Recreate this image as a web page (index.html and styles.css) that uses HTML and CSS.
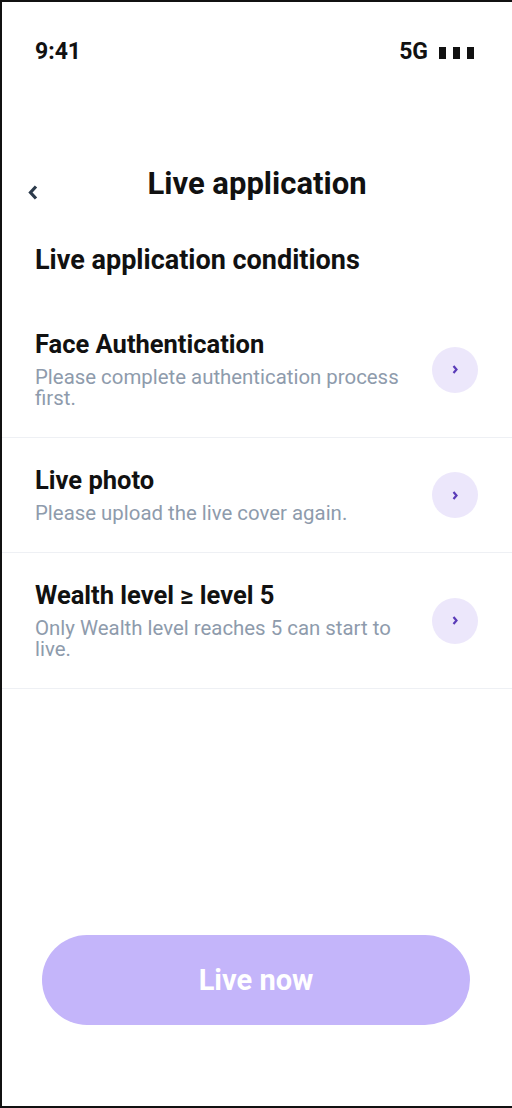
FILE: index.html
```html
<!DOCTYPE html>
<html>
<head>
	<title>Live application</title>
	<link rel="stylesheet" href="styles.css">
</head>
<body>
<div class="phone">
	<div class="status">
		<span class="time">9:41</span>
		<span class="net">5G <i class="bar"></i><i class="bar"></i><i class="bar"></i></span>
	</div>
	<div class="header">
		<a href="javascript:;" class="back">
			<svg width="10" height="15" viewBox="0 0 10 15"><polyline points="8,1.5 2.5,7.5 8,13.5" fill="none" stroke="#2c3a4b" stroke-width="3.2"/></svg>
		</a>
		<h1 class="title">Live application</h1>
	</div>
	<h2 class="heading">Live application conditions</h2>
	<ul class="list">
		<li class="item">
			<div class="text">
				<div class="name">Face Authentication</div>
				<div class="desc">Please complete authentication process first.</div>
			</div>
			<span class="go"><svg width="6" height="9" viewBox="0 0 6 9"><polyline points="1.5,1 4.5,4.5 1.5,8" fill="none" stroke="#5a3bb8" stroke-width="2.2"/></svg></span>
		</li>
		<li class="item">
			<div class="text">
				<div class="name">Live photo</div>
				<div class="desc">Please upload the live cover again.</div>
			</div>
			<span class="go"><svg width="6" height="9" viewBox="0 0 6 9"><polyline points="1.5,1 4.5,4.5 1.5,8" fill="none" stroke="#5a3bb8" stroke-width="2.2"/></svg></span>
		</li>
		<li class="item">
			<div class="text">
				<div class="name">Wealth level ≥ level 5</div>
				<div class="desc">Only Wealth level reaches 5 can start to live.</div>
			</div>
			<span class="go"><svg width="6" height="9" viewBox="0 0 6 9"><polyline points="1.5,1 4.5,4.5 1.5,8" fill="none" stroke="#5a3bb8" stroke-width="2.2"/></svg></span>
		</li>
	</ul>
	<div class="foot">
		<a href="javascript:;" class="btn">Live now</a>
	</div>
</div>
</body>
</html>
```
FILE: styles.css
```css
*{margin: 0;padding: 0;box-sizing: border-box;text-decoration: none;list-style: none;}
body{font-family: Roboto, "Noto Sans", sans-serif;color: #111;background: #fff;}
.phone{width: 512px;height: 1108px;border-top: 2px solid #111;border-left: 2px solid #111;border-bottom: 2px solid #111;display: flex;flex-direction: column;}
.status{display: flex;justify-content: space-between;align-items: center;padding: 37px 38px 0 33px;height: 63px;font-size: 23px;line-height: 26px;font-weight: 700;}
.net{display: flex;align-items: center;gap: 7px;}
.net .bar{display: block;width: 7px;height: 12px;background: #111;margin-top: 1px;}
.net .bar:first-of-type{margin-left: 4px;}
.header{position: relative;margin-top: 102px;height: 34px;}
.title{text-align: center;font-size: 31px;line-height: 34px;font-weight: 700;}
.back{position: absolute;left: 26px;top: 18px;display: block;width: 10px;height: 15px;}
.back svg{display: block;}
.heading{margin-top: 44px;padding-left: 33px;font-size: 27px;line-height: 30px;font-weight: 700;}
.list{margin-top: 27px;}
.item{display: flex;align-items: center;padding: 28px 34px 28px 33px;border-bottom: 1px solid #eef0f4;}
.text{flex: 1;padding-right: 28px;}
.name{font-size: 25.5px;line-height: 28px;font-weight: 700;}
.desc{margin-top: 9px;font-size: 20.4px;line-height: 21px;color: #8e9bac;}
.go{width: 46px;height: 46px;border-radius: 50%;background: #ece7fb;display: flex;align-items: center;justify-content: center;flex-shrink: 0;}
.go svg{display: block;}
.foot{margin-top: auto;padding: 0 0 81px 40px;}
.btn{display: block;width: 428px;height: 90px;border-radius: 45px;background: #c4b5fa;color: #fff;text-align: center;font-size: 29px;line-height: 90px;font-weight: 700;}
```
